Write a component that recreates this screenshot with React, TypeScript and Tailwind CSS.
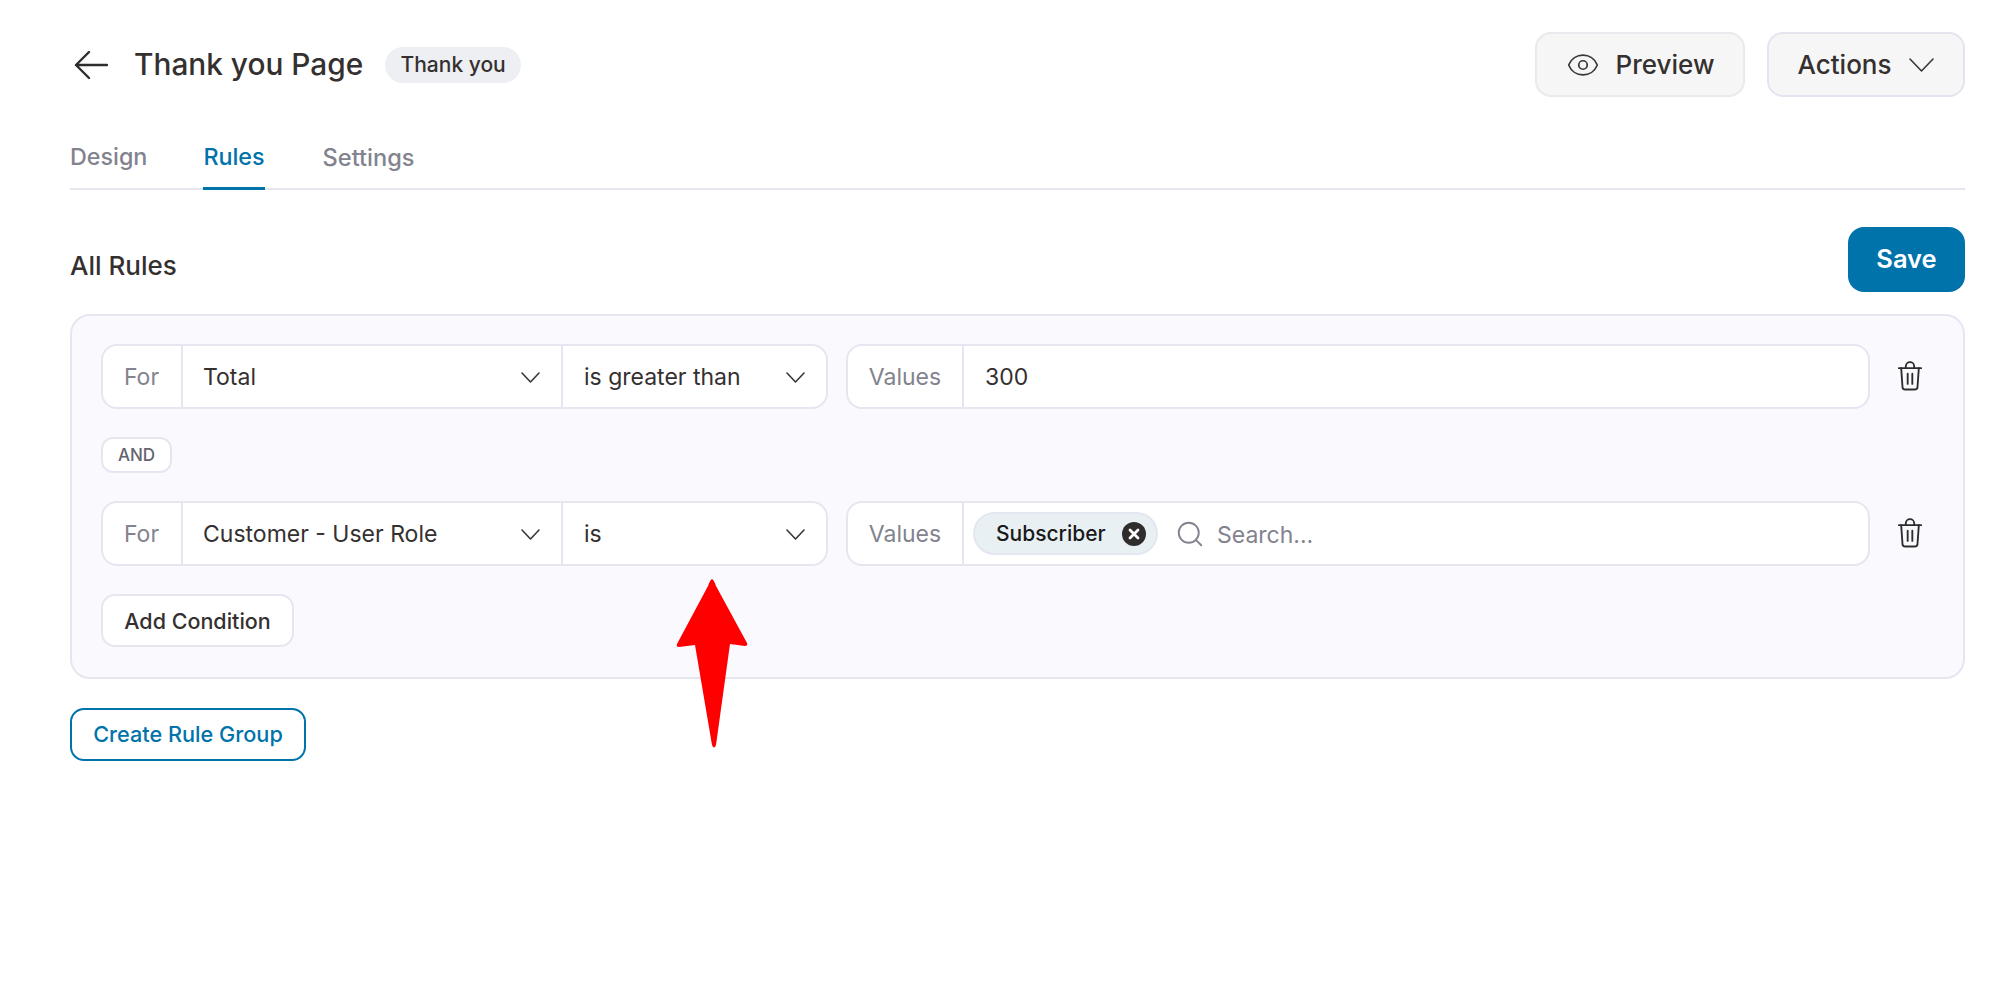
import { Eye, Search } from "lucide-react";

function Trash() {
  return (
    <svg width="26" height="31" viewBox="0 0 28 32" fill="none" stroke="#2f2c2c" strokeWidth="2" strokeLinecap="round" strokeLinejoin="round">
      <path d="M2 7h24" />
      <path d="M9.5 7V5a3.5 3.5 0 0 1 9 0v2" />
      <path d="M4.5 7l1.400 20a3 3 0 0 0 3 3h10.200a3 3 0 0 0 3-3L23.500 7" />
      <path d="M11.500 13v11M16.500 13v11" />
    </svg>
  );
}

function Chevron({ width, height }: { width: number; height: number }) {
  return (
    <svg width={width} height={height} viewBox={`0 0 ${width} ${height}`} fill="none" stroke="#3a3636" strokeWidth="1.600" strokeLinecap="round" strokeLinejoin="round">
      <path d={`M1 1L${width / 2} ${height - 1}L${width - 1} 1`} />
    </svg>
  );
}

function SelectCell({ label, className }: { label: string; className: string }) {
  return (
    <div className={`flex h-full items-center justify-between border-l-2 border-[#e6e6f0] pr-[21px] ${className}`}>
      <span className="pt-[1px]">{label}</span>
      <span className="pt-[2px]">
        <Chevron width={19} height={11} />
      </span>
    </div>
  );
}

function RuleRow({ field, operator, children }: { field: string; operator: string; children: React.ReactNode }) {
  return (
    <div className="flex h-[65px] items-center">
      <div className="flex h-full w-[727px] items-center rounded-[16px] border-2 border-[#e6e6f0] bg-white">
        <div className="w-[78px] pr-[1px] pt-[1px] text-center text-[#82838e]">For</div>
        <SelectCell label={field} className="w-[380px] pl-[20px]" />
        <SelectCell label={operator} className="flex-1 pl-[21px]" />
      </div>
      <div className="ml-[18px] flex h-full flex-1 items-center rounded-[16px] border-2 border-[#e6e6f0] bg-white">
        <div className="w-[114px] pt-[1px] text-center text-[#82838e]">Values</div>
        <div className="flex h-full flex-1 items-center border-l-2 border-[#e6e6f0] px-[21px]">{children}</div>
      </div>
      <div className="flex w-[93px] justify-center pr-[13px]">
        <Trash />
      </div>
    </div>
  );
}

export default function App() {
  return (
    <div className="relative min-h-[982px] bg-white pl-[70px] pr-[34px] pt-[32px] font-['Inter',sans-serif] text-[23px] text-[#353030]">
      {/* Header */}
      <div className="flex h-[65px] items-center">
        <svg className="ml-[4px]" width="34" height="30" viewBox="0 0 34 30" fill="none" stroke="#2f2c2c" strokeWidth="2.400" strokeLinecap="round" strokeLinejoin="round">
          <path d="M33 15H2M15 2L2 15l13 13" />
        </svg>
        <h1 className="ml-[26px] text-[29.800px] font-medium">Thank you Page</h1>
        <span className="ml-[22px] flex h-[36px] w-[136px] items-center justify-center rounded-full bg-[#edeff2] text-[21px] font-medium">
          Thank you
        </span>
        <div className="ml-auto flex h-full gap-[22px]">
          <button className="flex w-[210px] items-center justify-center gap-[16px] rounded-[16px] border-2 border-[#e9e9ee] bg-[#f6f6f7] text-[26px] font-medium">
            <Eye className="size-[34px] text-[#3a3636]" strokeWidth={1.2} />
            Preview
          </button>
          <button className="flex w-[198px] items-center justify-center gap-[18px] rounded-[16px] border-2 border-[#e4e4ee] bg-[#f6f6f7] text-[26px] font-medium">
            Actions
            <Chevron width={25} height={14} />
          </button>
        </div>
      </div>

      {/* Tabs */}
      <div className="mt-[25px] flex h-[68px] border-b-2 border-[#e6e6f0] text-[23.300px] font-medium text-[#82838e]">
        <div className="pt-[18px]">Design</div>
        <div className="-mb-[2px] ml-[56px] border-b-[3px] border-[#0073aa] pt-[18px] text-[#0073aa]">Rules</div>
        <div className="ml-[58px] pt-[18px] text-[23.600px]">Settings</div>
      </div>

      {/* All rules */}
      <div className="mt-[37px] flex h-[65px] items-center justify-between">
        <h2 className="pt-[11px] text-[26px] font-medium">All Rules</h2>
        <button className="h-full w-[117px] rounded-[16px] bg-[#0073aa] text-[25.500px] font-semibold text-white">Save</button>
      </div>

      <div className="mt-[22px] h-[365px] rounded-[20px] border-2 border-[#e6e6f0] bg-[#f9f9fe] pl-[29px] pt-[28px]">
        <RuleRow field="Total" operator="is greater than">
          <span className="pt-[1px]">300</span>
        </RuleRow>
        <div className="mt-[28px] flex h-[36px] w-[71px] items-center justify-center rounded-[12px] border-2 border-[#e6e6f0] bg-white pt-[1px] text-[17px] font-medium text-[#63646e]">
          AND
        </div>
        <div className="mt-[28px]">
          <RuleRow field="Customer - User Role" operator="is">
            <div className="-ml-[12px] flex h-[43px] w-[185px] items-center rounded-full border-2 border-[#e3e7ef] bg-[#e9f0f4] pl-[21px] text-[21px] font-medium text-[#1a1a1a]">
              Subscriber
              <svg className="ml-[16px] shrink-0" width="24" height="24" viewBox="0 0 24 24">
                <circle cx="12" cy="12" r="12" fill="#2f2c2c" />
                <path d="M8 8l8 8M16 8l-8 8" stroke="#fff" strokeWidth="2.800" strokeLinecap="round" />
              </svg>
            </div>
            <Search className="ml-[17px] size-[30px] text-[#82838e]" strokeWidth={1.5} />
            <span className="ml-[12px] pt-[3px] text-[#82838e]">Search...</span>
          </RuleRow>
        </div>
        <button className="mt-[28px] flex h-[53px] w-[193px] items-center justify-center rounded-[14px] border-2 border-[#e6e6f0] bg-white pt-[2px] text-[21.500px] font-medium">
          Add Condition
        </button>
      </div>

      <button className="mt-[29px] h-[53px] w-[236px] rounded-[14px] border-2 border-[#0073aa] bg-white text-[21.700px] font-medium text-[#0073aa]">
        Create Rule Group
      </button>

      {/* Red annotation arrow */}
      <svg className="absolute left-[670px] top-[574px]" width="84" height="180" viewBox="670 574 84 180">
        <path
          d="M712 579 Q714 580 716 586 L747 643 Q748 646 745 646 L730 644 L716 745 Q714 750 712 745 L695 645 L679 647 Q676 647 677 644 L708 586 Q710 580 712 579Z"
          fill="#ff0000"
        />
      </svg>
    </div>
  );
}
